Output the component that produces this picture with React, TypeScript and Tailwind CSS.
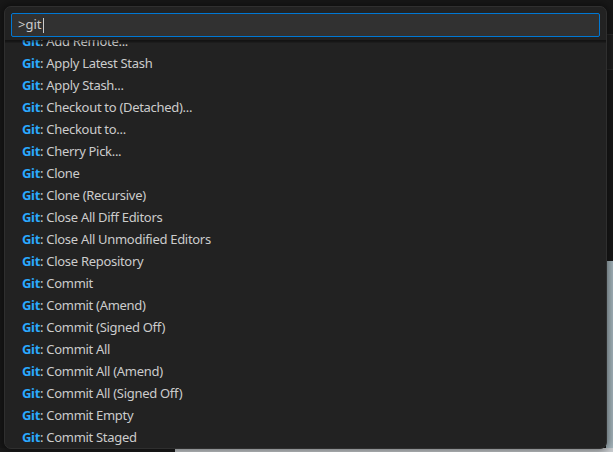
import React from "react";

const items = [
  "Add Remote...",
  "Apply Latest Stash",
  "Apply Stash...",
  "Checkout to (Detached)...",
  "Checkout to...",
  "Cherry Pick...",
  "Clone",
  "Clone (Recursive)",
  "Close All Diff Editors",
  "Close All Unmodified Editors",
  "Close Repository",
  "Commit",
  "Commit (Amend)",
  "Commit (Signed Off)",
  "Commit All",
  "Commit All (Amend)",
  "Commit All (Signed Off)",
  "Commit Empty",
  "Commit Staged",
];

export default function App() {
  return (
    <div
      className="relative w-[613px] h-[452px] overflow-hidden bg-[#181818]"
      style={{ fontFamily: '"Noto Sans", "Open Sans", sans-serif' }}
    >
      {/* background hints */}
      <div className="absolute right-0 top-[34px] w-[7px] h-[36px] bg-[#1f1f1f] border-y border-[#2b2b2b]" />
      <div className="absolute right-0 top-[261px] w-[7px] h-[191px] bg-[#a6b6bd]" />
      <div className="absolute left-[175px] bottom-0 w-[438px] h-[4px] bg-[#c9cdd0]" />
      <div className="absolute left-[0px] bottom-0 w-[175px] h-[4px] bg-[#1b1b1b]" />

      {/* quick pick */}
      <div className="absolute left-[4px] top-[6px] w-[603px] h-[443px] rounded-[7px] border border-[#2f2f2f] bg-[#222222] shadow-[0_0_8px_2px_rgba(0,0,0,0.45)] flex flex-col overflow-hidden">
        <div className="px-[6px] pt-[6px] pb-[3px]">
          <div className="h-[24px] border border-[#0078d4] bg-[#313131] rounded-[2px] flex items-center pl-[6px] text-[13px] text-[#cccccc]">
            <span>&gt;git</span>
            <span className="inline-block w-px h-[15px] bg-[#cccccc] ml-[2px]" />
          </div>
        </div>
        <div className="relative flex-1 overflow-hidden">
          <div className="absolute left-0 right-0 top-0 h-[3px] shadow-[inset_0_4px_3px_-2px_rgba(0,0,0,0.5)] z-10" />
          <div className="-mt-[9px]">
            {items.map((t) => (
              <div
                key={t}
                className="h-[22px] flex items-center pl-[17px] text-[13px] tracking-[-0.3px] text-[#cccccc] whitespace-nowrap"
              >
                <span className="font-bold text-[#2aaaff]">Git</span>
                <span>: {t}</span>
              </div>
            ))}
          </div>
        </div>
      </div>
    </div>
  );
}
